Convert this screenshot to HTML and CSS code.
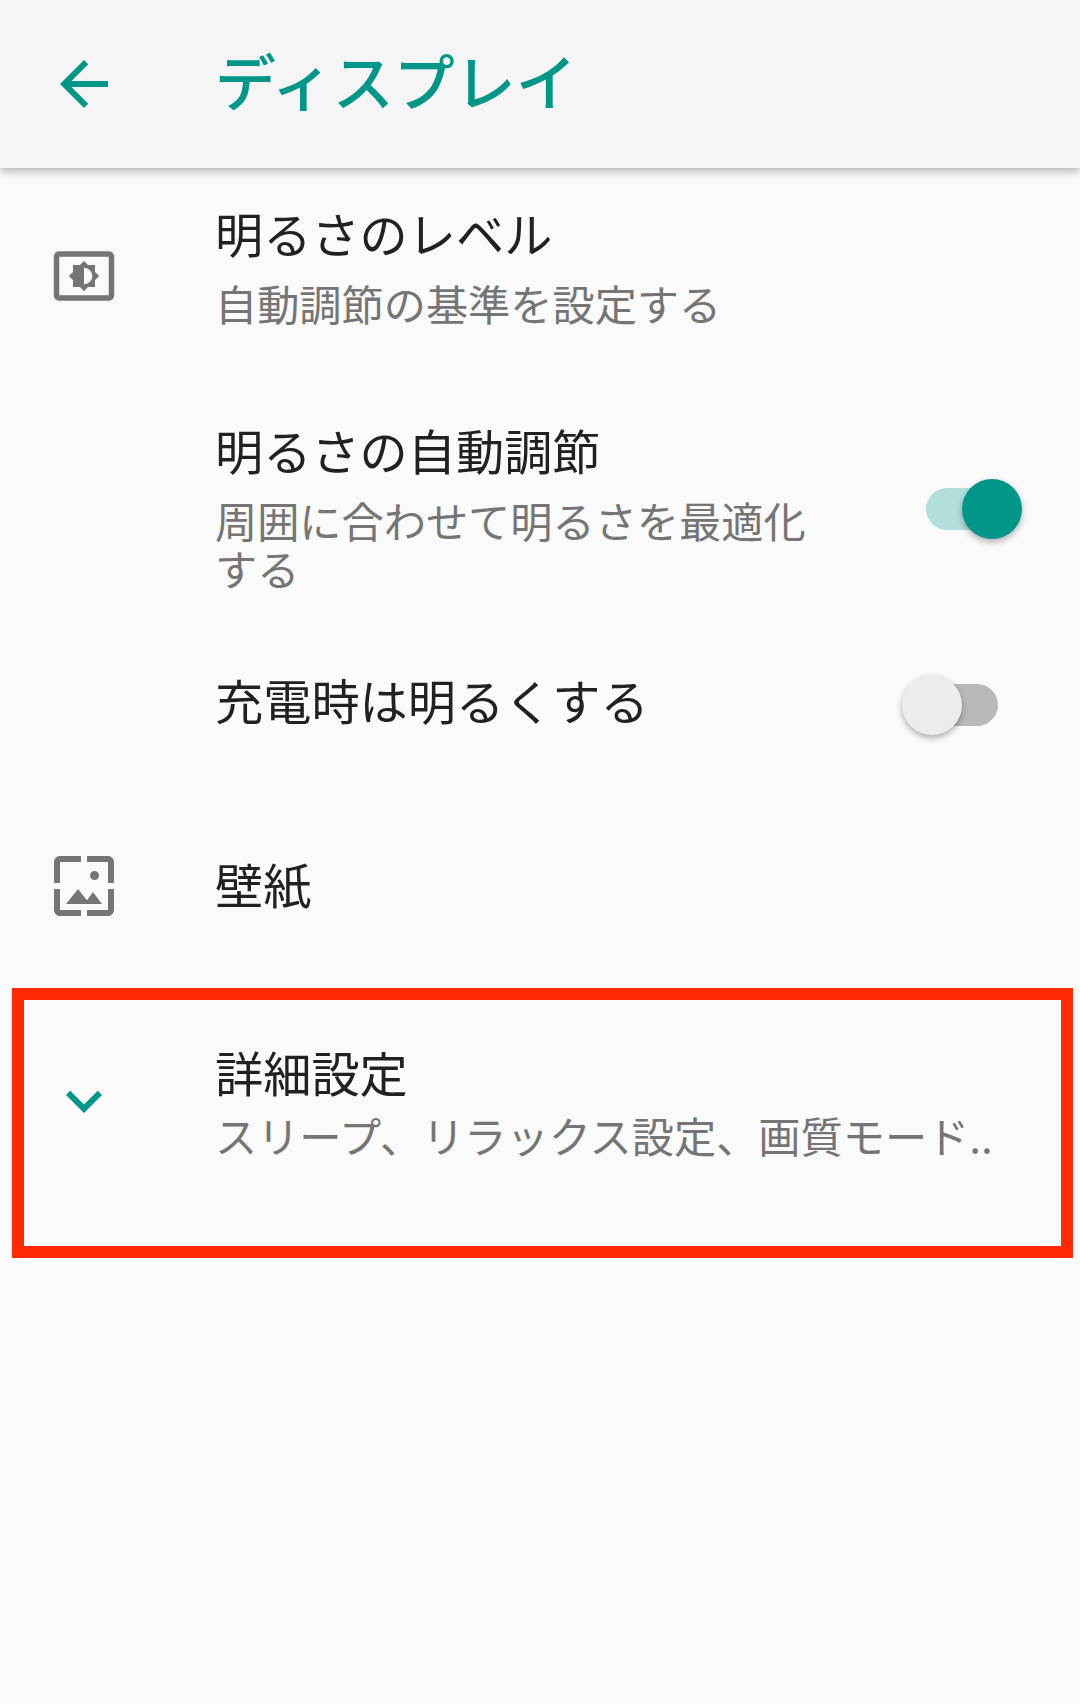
FILE: index.html
```html
<!DOCTYPE html>
<html lang="ja">
<head>
  <meta charset="UTF-8">
  <title>ディスプレイ</title>
  <link rel="stylesheet" href="styles.css">
</head>
<body>
<div class="screen">
  <div class="head">
    <svg class="icon" viewBox="0 0 24 24"><path class="teal" d="M20 11H7.83l5.59-5.59L12 4l-8 8 8 8 1.41-1.41L7.83 13H20v-2z"/></svg>
    <h1>ディスプレイ</h1>
  </div>

  <div class="row rowLevel">
    <svg class="icon iconBright" viewBox="0 0 24 24"><path class="gray" d="M21 3H3c-1.1 0-2 .9-2 2v14c0 1.1.9 2 2 2h18c1.1 0 2-.9 2-2V5c0-1.1-.9-2-2-2zm0 16.01H3V4.99h18v14.02zM8 16h2.5l1.5 1.5 1.5-1.5H16v-2.5l1.5-1.5-1.5-1.5V8h-2.5L12 6.5 10.5 8H8v2.5L6.5 12 8 13.5V16zm4-7c1.66 0 3 1.34 3 3s-1.34 3-3 3V9z"/></svg>
    <div class="text">
      <p class="name">明るさのレベル</p>
      <p class="sub">自動調節の基準を設定する</p>
    </div>
  </div>

  <div class="row rowAuto">
    <div class="icon"></div>
    <div class="text textShort">
      <p class="name">明るさの自動調節</p>
      <p class="sub">周囲に合わせて明るさを最適化する</p>
    </div>
    <div class="switch on"><span class="track"></span><span class="thumb"></span></div>
  </div>

  <div class="row rowCharge">
    <div class="icon"></div>
    <div class="text">
      <p class="name">充電時は明るくする</p>
    </div>
    <div class="switch"><span class="track"></span><span class="thumb"></span></div>
  </div>

  <div class="row rowPaper">
    <svg class="icon" viewBox="0 0 24 24"><path class="gray" d="M4 4h7V2H4c-1.1 0-2 .9-2 2v7h2V4zm6 9l-4 5h12l-3-4-2.03 2.71L10 13zm7-4.5c0-.83-.67-1.5-1.5-1.5S14 7.67 14 8.5s.67 1.5 1.5 1.5S17 9.33 17 8.5zM20 2h-7v2h7v7h2V4c0-1.1-.9-2-2-2zm0 18h-7v2h7c1.1 0 2-.9 2-2v-7h-2v7zM4 13H2v7c0 1.1.9 2 2 2h7v-2H4v-7z"/></svg>
    <div class="text">
      <p class="name">壁紙</p>
    </div>
  </div>

  <div class="row rowMore">
    <svg class="icon" viewBox="0 0 24 24"><path class="teal" d="M16.59 8.59L12 13.17 7.41 8.59 6 10l6 6 6-6z"/></svg>
    <div class="text">
      <p class="name">詳細設定</p>
      <p class="sub oneLine">スリープ、リラックス設定、画質モード..</p>
    </div>
  </div>

  <div class="mark"></div>
</div>
</body>
</html>
```

FILE: styles.css
```css
*{
  margin: 0;
  padding: 0;
  box-sizing: border-box;
}
html,body{
  width: 100%;
  height: 100%;
  background-color: #fafafa;
}
body{
  font-family: "Noto Sans CJK JP", "Noto Sans", sans-serif;
}
.screen{
  position: relative;
  width: 1080px;
  height: 1704px;
  overflow: hidden;
}
/*顶部*/
.head{
  display: flex;
  align-items: center;
  height: 168px;
  padding-left: 48px;
  background-color: #f5f5f5;
  box-shadow: 0 2px 10px rgba(0,0,0,0.35);
}
.head h1{
  margin-left: 95px;
  margin-bottom: 8px;
  font-size: 61px;
  font-weight: 500;
  line-height: 72px;
  color: #009688;
}
/*图标*/
.icon{
  flex: none;
  width: 72px;
  height: 72px;
}
.iconBright{
  width: 66px;
  height: 66px;
  margin: 43px 3px 0;
}
.teal{
  fill: #009688;
}
.gray{
  fill: #757575;
}
/*列表行*/
.row{
  display: flex;
  padding-left: 48px;
}
.text{
  margin-left: 95px;
  flex: 1;
}
.textShort{
  flex: none;
  width: 610px;
}
.name{
  font-size: 48.2px;
  line-height: 64px;
  color: #212121;
}
.sub{
  margin-top: 15px;
  font-size: 42.2px;
  line-height: 48px;
  color: #757575;
}
.oneLine{
  margin-top: 8px;
  white-space: nowrap;
}
.rowLevel{
  height: 216px;
  padding-top: 32px;
}
.rowAuto{
  height: 227px;
  padding-top: 33px;
}
.rowCharge{
  align-items: center;
  height: 184px;
}
.rowCharge .text{
  margin-bottom: 8px;
}
.rowCharge .switch{
  margin-top: 4px;
}
.rowPaper{
  align-items: center;
  height: 182px;
}
.rowPaper .text{
  margin-bottom: 6px;
}
.rowMore{
  padding-top: 62px;
}
.rowMore .icon{
  margin-top: 26px;
}
/*开关*/
.switch{
  position: relative;
  flex: none;
  width: 120px;
  height: 60px;
  margin-left: auto;
  margin-right: 58px;
}
.rowAuto .switch{
  margin-top: 62px;
}
.track{
  position: absolute;
  left: 24px;
  top: 9px;
  width: 72px;
  height: 42px;
  border-radius: 21px;
  background-color: #b9b9b9;
}
.thumb{
  position: absolute;
  left: 0;
  top: 0;
  width: 60px;
  height: 60px;
  border-radius: 50%;
  background-color: #ececec;
  box-shadow: 0 3px 6px rgba(0,0,0,0.3);
}
.on .track{
  background-color: #b2dfdb;
}
.on .thumb{
  left: 60px;
  background-color: #009688;
}
/*红框*/
.mark{
  position: absolute;
  left: 12px;
  top: 988px;
  width: 1061px;
  height: 270px;
  border: 12px solid #ff2a00;
}
```
